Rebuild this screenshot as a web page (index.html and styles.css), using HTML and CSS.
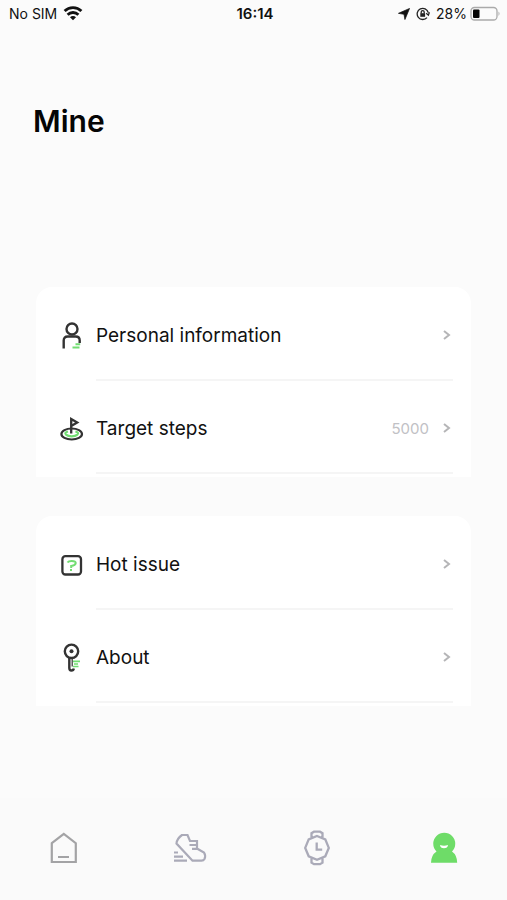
FILE: index.html
```html
<!DOCTYPE html>
<html lang="en">
<head>
<meta charset="utf-8">
<meta name="viewport" content="width=device-width, initial-scale=1">
<title>Mine</title>
<link rel="stylesheet" href="styles.css">
</head>
<body>
<div class="screen">
  <header class="status">
    <div class="status-side">
      <span>No SIM</span>
      <svg width="20" height="16" viewBox="0 0 20 16" fill="none" stroke="#111" stroke-width="2.800"><path d="M1.600 5a12 12 0 0 1 16.800 0M4.600 8.700a7.700 7.700 0 0 1 10.800 0"/><path d="M10 14.200 7 11.200a4.200 4.200 0 0 1 6 0Z" fill="#111" stroke="none"/></svg>
    </div>
    <time class="clock">16:14</time>
    <div class="status-side status-end">
      <svg width="12" height="12" viewBox="0 0 13 13"><path d="M12.500.5 7.500 12.500 6.500 6.800.5 5.800Z" fill="#111" stroke="#111" stroke-width=".8"/></svg>
      <svg class="lock" width="14" height="14" viewBox="0 0 14 14" fill="none" stroke="#222" stroke-width="1.300"><path d="M11 10.600A5.600 5.600 0 1 1 12.200 5.500M13.400 5.200 12.400 8.200 10.200 6.200"/><path d="M5.200 6.500V5.100a1.500 1.500 0 0 1 3 0v1.400"/><rect x="4.300" y="6.200" width="4.800" height="3.600" fill="#222" stroke="none"/></svg>
      <span>28%</span>
      <svg width="31" height="16" viewBox="0 0 31 16"><rect x="1" y="1.500" width="26" height="12.500" rx="3.500" fill="none" stroke="#aaa" stroke-width="1.300"/><rect x="3" y="3.500" width="6.500" height="8.500" rx="1" fill="#050505"/><path d="M28.500 5.500q2 2.200 0 4.500z" fill="#aaa"/></svg>
    </div>
  </header>

  <main class="content">
    <h1>Mine</h1>
    <section class="card">
      <a class="row" href="#personal">
        <svg class="icon" viewBox="0 0 28 30" fill="none" stroke="#333" stroke-width="2.400"><circle cx="14" cy="9" r="5.500"/><path d="M5.700 28.500V20.500q0-4 4-4h8q4 0 4 4v2.500"/><path d="M17.500 24.300h4.700M14.500 27.500h7" stroke="#72dd72" stroke-width="2"/></svg>
        <span class="line"><span class="label">Personal information</span><svg class="chevron" viewBox="0 0 8 10"><path d="m1 1 5 4-5 4"/></svg></span>
      </a>
      <a class="row" href="#steps">
        <svg class="icon" viewBox="0 0 28 30" fill="none"><ellipse cx="13.700" cy="21" rx="10.300" ry="5.500" stroke="#333" stroke-width="2.200"/><path d="M10 18.500q-4 1-2 3.100 2 1.700 5.700 1.700t5.700-1.700q2-2.100-2-3.100" stroke="#72dd72" stroke-width="2.200"/><path d="M13.200 20.500V6l6 3.500-6 3.500" stroke="#333" stroke-width="2.300"/></svg>
        <span class="line"><span class="label">Target steps</span><span class="value">5000</span><svg class="chevron" viewBox="0 0 8 10"><path d="m1 1 5 4-5 4"/></svg></span>
      </a>
    </section>
    <section class="card">
      <a class="row" href="#issues">
        <svg class="icon" viewBox="0 0 28 30" fill="none" stroke="#333" stroke-width="2.300"><rect x="4.400" y="7.200" width="18.600" height="18.300" rx="3"/><path d="M9.500 13.500q1-1.500 4.200-1.500 4.500 0 4 2.300-.4 2.200-4.500 2.700v2M13 20v2" stroke="#72dd72" stroke-width="2"/></svg>
        <span class="line"><span class="label">Hot issue</span><svg class="chevron" viewBox="0 0 8 10"><path d="m1 1 5 4-5 4"/></svg></span>
      </a>
      <a class="row" href="#about">
        <svg class="icon" viewBox="0 0 28 30" fill="none" stroke="#333" stroke-width="2.400"><circle cx="13.500" cy="9.300" r="6.700"/><circle cx="13.500" cy="9.300" r="2" fill="#333" stroke="none"/><path d="M11.300 15.500v10.500q0 2.500 2.100 2.500t2.400-2"/><path d="M14.200 15.500v9" stroke-width="1.200"/><path d="M15 19.300h7M16 22h4M15 24.500h5.500" stroke="#72dd72" stroke-width="1.700"/></svg>
        <span class="line"><span class="label">About</span><svg class="chevron" viewBox="0 0 8 10"><path d="m1 1 5 4-5 4"/></svg></span>
      </a>
    </section>
  </main>

  <nav class="tabs" aria-label="Main">
    <a href="#home" aria-label="Home"><svg viewBox="0 0 36 36" fill="none" stroke="#a3a3a5" stroke-width="2.200"><path d="M6.800 13.200 18.800 4l12 9.200V32h-24ZM13 27h11"/></svg></a>
    <a href="#activity" aria-label="Activity"><svg viewBox="0 0 36 36" fill="none" stroke="#aaaab8" stroke-width="2.200"><path d="M10 5h5.500L18 11h7v7.500l7 4q2 3 .500 6.500-1 1.700-3 1.700H20.500L4.500 13.500Q5 8.500 10 5ZM17.500 15h7.500M20 18.800h5.500M2 22.500h4M2 26.700h9M2 30.700h13"/></svg></a>
    <a href="#device" aria-label="Device"><svg viewBox="0 0 36 36" fill="none" stroke="#aaaab8" stroke-width="2.300"><path d="m18 6 8.300 3.400 3.500 8.500-3.500 8.400L18 29.800l-8.300-3.500-3.500-8.400 3.500-8.500ZM12.500 7.700V3.200L15 1.700h6l2.500 1.500v4.500M12.500 28.200v4.500l2.500 1.500h6l2.500-1.500v-4.500M17.700 12.400v7.300h5.500"/></svg></a>
    <a href="#mine" aria-label="Mine" aria-current="page"><svg viewBox="0 0 36 36"><path d="M10.500 21.500a11 11 0 1 1 15.500 0q5 3.500 5.200 11.200H5q.2-7.700 5.500-11.200Z" fill="#6edc68"/><path d="M14 15q4 1.500 8 0-.4 3.200-4 3.200T14 15Z" fill="#fff"/></svg></a>
  </nav>
</div>
</body>
</html>
```
FILE: styles.css
```css
* {
  box-sizing: border-box;
}

body {
  margin: 0;
  background: #fbfbfb;
  color: #111;
  font-family: Inter, "Liberation Sans", sans-serif;
}

a {
  color: inherit;
  text-decoration: none;
}

svg {
  display: block;
  flex: none;
}

.screen {
  display: flex;
  flex-direction: column;
  min-height: 100vh;
}

.status {
  display: grid;
  grid-template-columns: 1fr auto 1fr;
  align-items: center;
  height: 27px;
  padding: 0 6px 0 9px;
  font-size: 14px;
}

.status-side {
  display: flex;
  align-items: center;
  gap: 6px;
}

.status-end {
  justify-content: flex-end;
  gap: 3px;
}

.lock {
  margin: 0 3px;
}

.clock {
  font-size: 15px;
  font-weight: 600;
}

.content {
  flex: 1;
  padding: 74px 36px 32px;
}

h1 {
  margin: 0 0 146px -3px;
  font-size: 30px;
  font-weight: 600;
  line-height: 40px;
  color: #050505;
}

.card {
  padding: 1px 0 3px;
  border-radius: 16px 16px 0 0;
  background: #fff;
}

.card + .card {
  margin-top: 39px;
}

.row {
  display: flex;
  align-items: center;
  gap: 10px;
  padding: 0 18px 0 22px;
}

.icon {
  width: 28px;
  height: 30px;
}

.line {
  display: flex;
  flex: 1;
  align-items: center;
  height: 93px;
  padding: 3px 2px 0 0;
  border-bottom: 2px solid #f5f5f5;
}

.label {
  flex: 1;
  font-size: 19px;
}

.value {
  margin-right: 14px;
  color: #c1c1c5;
  font-size: 15px;
}

.chevron {
  width: 8px;
  height: 10px;
  fill: none;
  stroke: #b5b5b7;
  stroke-width: 2;
}

.tabs {
  display: grid;
  grid-template-columns: repeat(4, 1fr);
  height: 102px;
  padding-top: 32px;
  background: #fafafa;
}

.tabs a {
  display: flex;
  justify-content: center;
}

.tabs svg {
  width: 36px;
  height: 36px;
}
```
